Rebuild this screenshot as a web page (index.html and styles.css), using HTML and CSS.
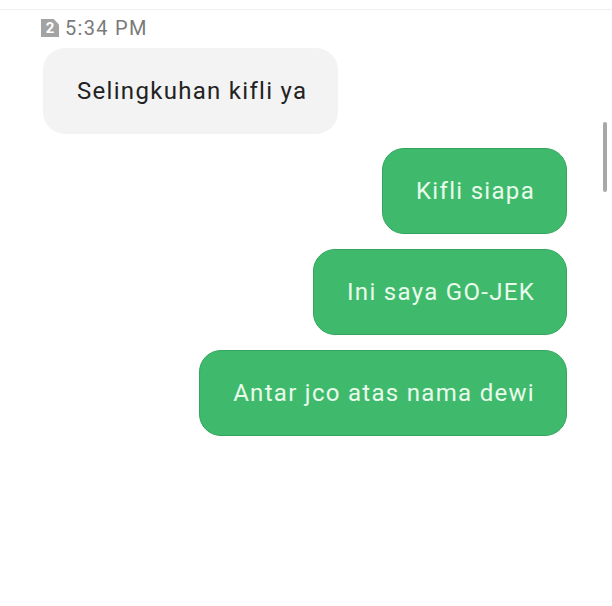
FILE: index.html
```html
<!DOCTYPE html>
<html lang="en">
<head>
    <meta charset="UTF-8">
    <meta name="viewport" content="width=device-width, initial-scale=1.0">
    <title>Chat</title>
    <link rel="stylesheet" href="styles.css">
</head>
<body>

    <div class="chat">
        <div class="scrollbar"></div>

        <div class="stamp">
            <span class="sim">2</span>
            <span class="time">5:34 PM</span>
        </div>

        <div class="bubble in">Selingkuhan kifli ya</div>

        <div class="outgoing">
            <div class="bubble out">Kifli siapa</div>
            <div class="bubble out">Ini saya GO-JEK</div>
            <div class="bubble out">Antar jco atas nama dewi</div>
        </div>
    </div>

</body>
</html>
```

FILE: styles.css
```css
/* General Styling */
body {
    margin: 0;
    background: #fff;
    font-family: 'Roboto', 'Liberation Sans', sans-serif;
}

.chat {
    position: relative;
    width: 612px;
    height: 606px;
    box-sizing: border-box;
    border-top: 1px solid #f0f0f0;
    margin-top: 9px;
    padding: 7px 45px 0 43px;
}

/* Scroll indicator on the right edge */
.scrollbar {
    position: absolute;
    right: 5px;
    top: 112px;
    width: 4px;
    height: 70px;
    border-radius: 2px;
    background: #a8a8a8;
}

/* Time stamp with SIM badge */
.stamp {
    display: flex;
    align-items: center;
    gap: 6px;
    height: 22px;
    margin-left: -2px;
}

.sim {
    width: 18px;
    height: 18px;
    background: #a3a3a3;
    color: #fff;
    font-size: 15px;
    font-weight: bold;
    line-height: 18px;
    text-align: center;
    clip-path: polygon(0 0, 70% 0, 100% 30%, 100% 100%, 0 100%);
}

.time {
    font-size: 20px;
    letter-spacing: 1.3px;
    color: #7a7a7a;
}

/* Bubbles */
.bubble {
    height: 86px;
    display: flex;
    align-items: center;
    box-sizing: border-box;
    border-radius: 22px;
    font-size: 24px;
    letter-spacing: 1.3px;
    white-space: nowrap;
}

.in {
    width: 295px;
    margin-top: 9px;
    padding-left: 34px;
    background: #f3f3f3;
    color: #222;
}

.outgoing {
    display: flex;
    flex-direction: column;
    align-items: flex-end;
    gap: 15px;
    margin-top: 14px;
}

.out {
    padding: 0 31px 0 33px;
    background: #3fba6d;
    border: 1px solid #34a55e;
    color: #e9fbea;
}
```
